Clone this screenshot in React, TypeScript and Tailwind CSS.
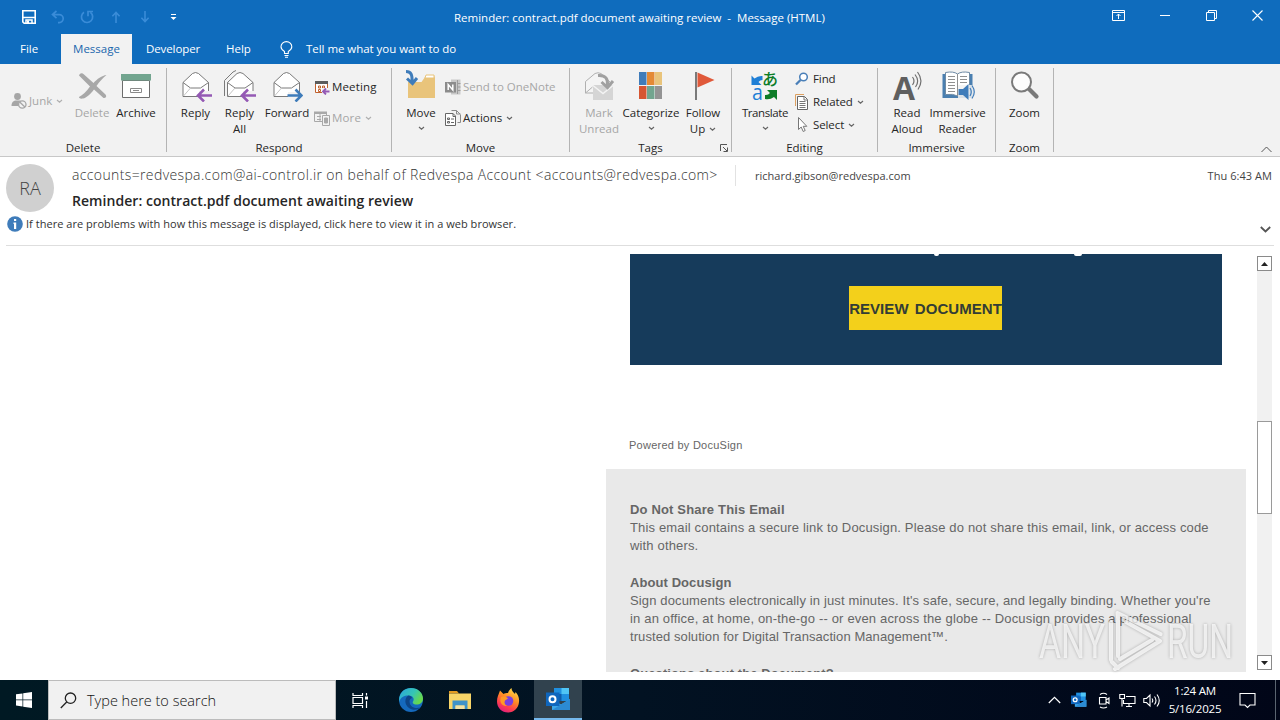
import type { ReactNode } from "react";

function Caret({ className = "" }: { className?: string }) {
  return (
    <svg width="7" height="5" viewBox="0 0 7 5" className={`inline-block shrink-0 ${className}`}>
      <path d="M1 1l2.5 2.2L6 1" fill="none" stroke="currentColor" strokeWidth="1.2" />
    </svg>
  );
}

/* ---------- title bar icons ---------- */

function SaveIcon() {
  return (
    <svg width="14" height="14" viewBox="0 0 14 14">
      <path d="M.8.8h12.4v12.4H2.2L.8 11.8z" fill="none" stroke="#fff" strokeWidth="1.6" />
      <path d="M1 7.500h12M4 13V10h6v3" fill="none" stroke="#fff" strokeWidth="1.5" />
      <path d="M5 10.5h2V13H5z" fill="#fff" />
    </svg>
  );
}

function UndoIcon() {
  return (
    <svg width="14" height="14" viewBox="0 0 14 14" fill="none" stroke="#3a8cd8" strokeWidth="1.7">
      <path d="M5.5 1L1.5 4.6l4 3.6M1.8 4.6h6.4a4 4 0 010 8H7" />
    </svg>
  );
}

function RedoIcon() {
  return (
    <svg width="14" height="14" viewBox="0 0 14 14" fill="none" stroke="#3a8cd8" strokeWidth="1.7">
      <path d="M4 2.2A5.6 5.6 0 1010.4 2.4M8 6.2V1.5h5" />
    </svg>
  );
}

function ArrowIcon({ down = false }: { down?: boolean }) {
  return (
    <svg
      width="10"
      height="12"
      viewBox="0 0 10 12"
      fill="none"
      stroke="#3a8cd8"
      strokeWidth="1.6"
      className={down ? "rotate-180" : ""}
    >
      <path d="M5 12V1.5M1.4 5.2L5 1.5l3.6 3.7" />
    </svg>
  );
}

/* ---------- ribbon icons ---------- */

function JunkIcon() {
  return (
    <svg width="16" height="16" viewBox="0 0 16 16">
      <circle cx="6.500" cy="3.500" r="3.4" fill="#a6a6a6" />
      <path d="M.5 13c0-4 2-5.500 5-5.500h4l-2 5.500z" fill="#a6a6a6" />
      <circle cx="11.3" cy="11.5" r="3.7" fill="#f2f2f2" stroke="#a6a6a6" strokeWidth="1.3" />
      <path d="M8.7 9l5.2 5" stroke="#a6a6a6" strokeWidth="1.3" />
    </svg>
  );
}

function DeleteIcon() {
  return (
    <svg width="32" height="32" viewBox="0 0 32 32">
      <path
        d="M3 5.5C4 3 6 2.5 8 4.500l9.500 8.5C21 9 26 5.500 30.500 5c-3.500 3-7 6.500-10 11l9 8.500c1.500 2 .5 3.500-2 3.500L18 19.500c-3.500 4.500-7.500 8.500-11 9-2.500.5-4.500-.5-4-1.500 3.500-2 7.500-5.500 11-10.500z"
        fill="#a8a8a8"
      />
    </svg>
  );
}

function ArchiveIcon() {
  return (
    <svg width="32" height="32" viewBox="0 0 32 32">
      <path d="M2.5 10.5h27v17h-27z" fill="#fff" stroke="#6d6d6d" />
      <path d="M1 4h30v6.5H1z" fill="#72a58f" />
      <path d="M10.5 18.5h11v4h-11zM13 20.5h6" fill="#fff" stroke="#8a8a8a" />
    </svg>
  );
}

function Envelope() {
  return (
    <>
      <path d="M3 12.5L12.5 3.5q3-2 6 0l10 9v14H3z" fill="#fff" stroke="#7a7a7a" />
      <path d="M3 12.5l7.5 5.500h10l8-5.500" fill="none" stroke="#7a7a7a" />
      <path d="M3.5 26l7-8" stroke="#c4c4c4" />
    </>
  );
}

function ReplyIcon() {
  return (
    <svg width="32" height="32" viewBox="0 0 32 32">
      <Envelope />
      <path d="M19 21h12v11H19z" fill="#f2f2f2" />
      <path d="M32 25.5H18.5M24 19.5l-6 6 6 6" fill="none" stroke="#9459b4" strokeWidth="2.6" />
    </svg>
  );
}

function ReplyAllIcon() {
  return (
    <svg width="32" height="32" viewBox="0 0 32 32">
      <path d="M.5 26V10.500L9 2l3-1.500" fill="none" stroke="#7a7a7a" />
      <g transform="translate(.5 0)">
        <Envelope />
      </g>
      <path d="M19 21h13v11H19z" fill="#f2f2f2" />
      <path d="M32 25.5H18.500M24 19.5l-6 6 6 6" fill="none" stroke="#9459b4" strokeWidth="2.6" />
    </svg>
  );
}

function ForwardIcon() {
  return (
    <svg width="32" height="32" viewBox="0 0 32 32">
      <Envelope />
      <path d="M17 22h15v10H17z" fill="#f2f2f2" />
      <path d="M16.5 25.5H30M24.5 19.5l6 6-6 6" fill="none" stroke="#3f7cba" strokeWidth="2.6" />
    </svg>
  );
}

function MeetingIcon() {
  return (
    <svg width="16" height="16" viewBox="0 0 16 16">
      <path d="M1.500 2.500h12v11h-12z" fill="#fff" stroke="#c0622f" />
      <path d="M1 2h13v3H1z" fill="#5c5c5c" />
      <path d="M4.500 7h2v2h-2zM4.500 10.500h2v2h-2zM8.500 7h2v2h-2z" fill="none" stroke="#c0622f" />
      <path d="M8 9h8v7H8z" fill="#f2f2f2" />
      <path d="M15.500 12.500H9.500M12 9.500l-3 3 3 3" fill="none" stroke="#9459b4" strokeWidth="1.800" />
    </svg>
  );
}

function MoreIcon() {
  return (
    <svg width="16" height="16" viewBox="0 0 16 16" fill="none" stroke="#a8a8a8">
      <path d="M.5 2.5h12v9H.5zM3 6.5h4M3 9.5h4M6 4v7" />
      <path d="M0 1.5h13V4H0z" fill="#a8a8a8" stroke="none" />
      <path d="M8.5 5.5h7v10h-7z" fill="#f2f2f2" />
      <path d="M10.5 8h3v5h-3z" fill="#a8a8a8" />
    </svg>
  );
}

function MoveIcon() {
  return (
    <svg width="32" height="32" viewBox="0 0 32 32">
      <path d="M3 12h13.5l3.500-5h1V5h8l1 3v20H3z" fill="#e9c47b" />
      <path d="M21 5h8v3h-9z" fill="#fff" stroke="#e9c47b" />
      <path d="M1 1.500c5 0 6.500 3 6 11M2 8.500l5.500 5 4.500-5.500" fill="none" stroke="#3f7cba" strokeWidth="3" />
    </svg>
  );
}

function OneNoteIcon() {
  return (
    <svg width="16" height="16" viewBox="0 0 16 16">
      <path d="M6 .5h9.5v15H6z" fill="#c8c8c8" />
      <path d="M12.5 1v14M12.5 4.5h3M12.5 8h3M12.5 11.5h3" stroke="#9c9c9c" />
      <path d="M0 3h11v10.5H0z" fill="#8c8c8c" />
      <path d="M3.2 11V5.5l4.600 5.500V5.5" fill="none" stroke="#fff" strokeWidth="1.5" />
    </svg>
  );
}

function ActionsIcon() {
  return (
    <svg width="17" height="16" viewBox="0 0 17 16" fill="none" stroke="#666">
      <path d="M8 3.5H.5v12h10V6L8 3.500v3h2.500" fill="#fff" />
      <path d="M2.500 8h2v1.500h-2zM2.500 11.500h2V13h-2zM6 9h3M6 12.500h3" />
      <path d="M6.500.5h5l4 4M12.500 12.500h3V5M11.500.5V4h4" stroke="#8a8a8a" />
    </svg>
  );
}

function MarkUnreadIcon() {
  return (
    <svg width="32" height="32" viewBox="0 0 32 32">
      <path d="M2.5 23V11.5L12 3.5q3-1.500 6 0l9 8.500v11z" fill="#f4f4f4" stroke="#b0b0b0" />
      <path d="M2.500 23l7-6" stroke="#b0b0b0" />
      <path d="M10 15h20v15H10z" fill="#d5d5d5" />
      <path d="M10 15.500l10 8 10-8" fill="none" stroke="#f4f4f4" strokeWidth="1.500" />
      <path d="M15 5.500c8-.5 10 3.500 9.500 10M18.500 12l6 5.500 5.500-6.500" fill="none" stroke="#a0a0a0" strokeWidth="3" />
    </svg>
  );
}

function CategorizeIcon() {
  return (
    <svg width="32" height="32" viewBox="0 0 32 32">
      <path d="M4 2h7.500v13H4z" fill="#3f7cba" />
      <path d="M12 2h7.500v13H12z" fill="#e48a35" />
      <path d="M20 2h7v13h-7z" fill="#e9c47b" />
      <path d="M4 16h7.500v13H4z" fill="#d65532" />
      <path d="M12 16h7.500v13H12z" fill="#72a58f" />
      <path d="M20 16h7v13h-7z" fill="#949494" />
    </svg>
  );
}

function FlagIcon() {
  return (
    <svg width="32" height="32" viewBox="0 0 32 32">
      <path d="M8 2h2v28H8z" fill="#7a7a7a" />
      <path d="M10.500 2.500l17 7.500-17 7.500z" fill="#e0593a" />
    </svg>
  );
}

function TranslateIcon() {
  return (
    <svg width="32" height="32" viewBox="0 0 32 32" className="overflow-visible">
      <path d="M2.500 5.500l3 3q3.500-3 8-2.500v4q-2.500 0-4 2l3 3h-10z" fill="#1f7fd6" />
      <path d="M28 30l-3-3q-4 3-9 2v-4q3 .500 5-2l-3-3h10z" fill="#0d7d27" />
      <text x="3" y="29.500" fontFamily="Open Sans" fontSize="21" fontWeight="500" textLength="10.500" lengthAdjust="spacingAndGlyphs" fill="#1f7fd6">
        a
      </text>
      <text x="13" y="15" fontFamily="Noto Sans CJK JP" fontSize="16" fontWeight="500" fill="#0d7d27">
        あ
      </text>
    </svg>
  );
}

function FindIcon() {
  return (
    <svg width="14" height="14" viewBox="0 0 14 14" fill="none" stroke="#4a7fb8">
      <circle cx="8.500" cy="5" r="3.800" strokeWidth="1.500" fill="#fff" />
      <path d="M5.500 8L1 12.500" strokeWidth="2.300" />
    </svg>
  );
}

function RelatedIcon() {
  return (
    <svg width="14" height="16" viewBox="0 0 14 16" fill="none">
      <path d="M.5 12V.5H9" stroke="#dda060" />
      <path d="M2.500 2.500h7l3 3v10h-10z" fill="#fff" stroke="#666" />
      <path d="M9 2.500V6h3.500M4.500 7.500h6M4.500 9.500h6M4.500 11.500h6M4.500 13.500h6" stroke="#777" />
    </svg>
  );
}

function SelectIcon() {
  return (
    <svg width="14" height="16" viewBox="0 0 14 16">
      <path d="M3.500 .5v12l2.700-2.500 2 4.500 2-1-2-4.200h3.600z" fill="#fff" stroke="#777" />
    </svg>
  );
}

function ReadAloudIcon() {
  return (
    <svg width="32" height="32" viewBox="0 0 32 32" className="overflow-visible">
      <text x="2" y="29.500" fontFamily="Open Sans" fontWeight="700" fontSize="33" textLength="22" lengthAdjust="spacingAndGlyphs" fill="#5f5f5f">
        A
      </text>
      <path d="M21.500 7q3 4 0 8M24 4.500q5 6.500.5 12.500M26.500 2q6.500 8.500.5 17.500" fill="none" stroke="#6f6f6f" strokeWidth="1.200" />
    </svg>
  );
}

function ImmersiveReaderIcon() {
  return (
    <svg width="34" height="32" viewBox="0 0 34 32">
      <path d="M1.500 4h30v24h-30z" fill="#4a7fb0" />
      <path d="M4.500 2.500q8-1.500 12 1.500 4-3 12-1.500v22q-8-1-12 1.500-4-2.500-12-1.500z" fill="#fff" stroke="#6f8ba5" />
      <path d="M7 6.500h7M7 9.500h7M7 12.500h7M7 15.500h7M7 18.500h7M7 21.500h7M19 6.500h7M19 9.500h7M19 12.500h7M16.500 4v22" stroke="#909090" />
      <path d="M17 15h15.500v14.500H17z" fill="#f2f2f2" fillOpacity=".85" />
      <path d="M17.500 19h4.500l5.500-5v16l-5.500-5h-4.500z" fill="#3f7cba" />
      <path d="M29 18q2.500 4 0 8M31 15.500q4.500 6.500 0 13" fill="none" stroke="#3f7cba" strokeWidth="1.200" />
    </svg>
  );
}

function ZoomIcon() {
  return (
    <svg width="32" height="32" viewBox="0 0 32 32">
      <path d="M19 18l8.500 8.500" stroke="#7a7a7a" strokeWidth="4.200" strokeLinecap="round" />
      <circle cx="12.500" cy="12" r="9.500" fill="#fdfdfd" stroke="#7a7a7a" strokeWidth="2" />
    </svg>
  );
}

/* ---------- ribbon ---------- */

interface IBigButton {
  icon: ReactNode;
  lines: string[];
  width: string;
  caret?: boolean;
  disabled?: boolean;
}

function BigButton({ icon, lines, width, caret, disabled }: IBigButton) {
  return (
    <div className={`flex shrink-0 flex-col items-center whitespace-nowrap ${width} ${disabled ? "text-[#a6a6a6]" : "text-[#262626]"}`}>
      <div className="mb-[3px] flex h-8 justify-center">{icon}</div>
      {lines.map((line, i) => (
        <div key={line} className="flex h-4 items-center gap-1 leading-4">
          {line}
          {caret && i === 1 && <Caret className="text-[#666]" />}
        </div>
      ))}
      {caret && lines.length === 1 && <Caret className="mt-[5px] text-[#666]" />}
    </div>
  );
}

interface ISmallButton {
  icon: ReactNode;
  label: string;
  caret?: boolean;
  disabled?: boolean;
}

function SmallButton({ icon, label, caret, disabled }: ISmallButton) {
  return (
    <div className={`flex h-4 items-center whitespace-nowrap ${disabled ? "text-[#a6a6a6]" : "text-[#262626]"}`}>
      <span className="flex w-[18px] shrink-0 items-center">{icon}</span>
      <span className="leading-4">{label}</span>
      {caret && <Caret className={`ml-1 ${disabled ? "text-[#b0b0b0]" : "text-[#666]"}`} />}
    </div>
  );
}

function Group({ label, width, launcher, children }: { label: string; width: string; launcher?: boolean; children: ReactNode }) {
  return (
    <div className={`relative mt-1 flex h-[84px] shrink-0 flex-col border-r border-[#b4b4b4] ${width}`}>
      <div className="flex h-[72px] shrink-0 pt-0.5">{children}</div>
      <div className="text-center leading-4 text-[#262626]">{label}</div>
      {launcher && (
        <svg width="8" height="8" viewBox="0 0 8 8" className="absolute right-[3px] bottom-0" fill="none" stroke="#555">
          <path d="M.5 7V.5H7M3 3l4 4M7.500 3.500v4h-4" />
        </svg>
      )}
    </div>
  );
}

function Ribbon() {
  return (
    <div className="flex h-[93px] border-b border-[#c8c8c8] bg-[#f2f2f2] text-[11.5px]">
      <Group label="Delete" width="w-[167px]">
        <div className="flex w-[72px] items-start pt-[23px] pl-[11px]">
          <SmallButton icon={<JunkIcon />} label="Junk" caret disabled />
        </div>
        <BigButton icon={<DeleteIcon />} lines={["Delete"]} width="w-[40px]" disabled />
        <BigButton icon={<ArchiveIcon />} lines={["Archive"]} width="w-[48px]" />
      </Group>
      <Group label="Respond" width="w-[225px]">
        <div className="w-1.5" />
        <BigButton icon={<ReplyIcon />} lines={["Reply"]} width="w-[45px]" />
        <BigButton icon={<ReplyAllIcon />} lines={["Reply", "All"]} width="w-[43px]" />
        <BigButton icon={<ForwardIcon />} lines={["Forward"]} width="w-[52px]" />
        <div className="flex flex-col gap-[15px] pt-[9px] pl-px tracking-[0.15px]">
          <SmallButton icon={<MeetingIcon />} label="Meeting" />
          <SmallButton icon={<MoreIcon />} label="More" caret disabled />
        </div>
      </Group>
      <Group label="Move" width="w-[178px]">
        <div className="w-1.5" />
        <BigButton icon={<MoveIcon />} lines={["Move"]} width="w-[46px]" caret />
        <div className="flex flex-col gap-[15px] pt-[9px] pl-px">
          <SmallButton icon={<OneNoteIcon />} label="Send to OneNote" disabled />
          <SmallButton icon={<ActionsIcon />} label="Actions" caret />
        </div>
      </Group>
      <Group label="Tags" width="w-[162px]" launcher>
        <div className="w-1.5" />
        <BigButton icon={<MarkUnreadIcon />} lines={["Mark", "Unread"]} width="w-[46px]" disabled />
        <BigButton icon={<CategorizeIcon />} lines={["Categorize"]} width="w-[58px]" caret />
        <BigButton icon={<FlagIcon />} lines={["Follow", "Up"]} width="w-[46px]" caret />
      </Group>
      <Group label="Editing" width="w-[146px]">
        <div className="w-[7px]" />
        <div className="tracking-[-0.4px]">
          <BigButton icon={<TranslateIcon />} lines={["Translate"]} width="w-[52px]" caret />
        </div>
        <div className="flex flex-col gap-[7px] pt-px pl-1 tracking-[-0.1px]">
          <SmallButton icon={<FindIcon />} label="Find" />
          <SmallButton icon={<RelatedIcon />} label="Related" caret />
          <SmallButton icon={<SelectIcon />} label="Select" caret />
        </div>
      </Group>
      <Group label="Immersive" width="w-[118px]">
        <div className="w-2" />
        <BigButton icon={<ReadAloudIcon />} lines={["Read", "Aloud"]} width="w-[42px]" />
        <BigButton icon={<ImmersiveReaderIcon />} lines={["Immersive", "Reader"]} width="w-[59px]" />
      </Group>
      <Group label="Zoom" width="w-[58px]">
        <BigButton icon={<ZoomIcon />} lines={["Zoom"]} width="w-[57px]" />
      </Group>
      <div className="flex grow items-end justify-end pr-2 pb-[3px]">
        <svg width="11" height="7" viewBox="0 0 11 7" fill="none" stroke="#555">
          <path d="M.5 6l5-5 5 5" />
        </svg>
      </div>
    </div>
  );
}

function TitleBar() {
  return (
    <div className="flex h-[34px] items-center bg-[#0f6cbd] text-[11.5px] text-white">
      <div className="flex w-[454px] items-center pl-[22px]">
        <SaveIcon />
        <span className="ml-[15px]"><UndoIcon /></span>
        <span className="ml-[15px]"><RedoIcon /></span>
        <span className="ml-[17px]"><ArrowIcon /></span>
        <span className="ml-[19px]"><ArrowIcon down /></span>
        <svg width="7" height="7" viewBox="0 0 7 7" className="ml-[20px]">
          <path d="M1 .5h5" stroke="#fff" />
          <path d="M.5 3h6l-3 3z" fill="#fff" />
        </svg>
      </div>
      <div className="pt-0.5 whitespace-pre">Reminder: contract.pdf document awaiting review  -  Message (HTML)</div>
      <div className="mb-1 ml-auto flex items-center pr-[17px]">
        <svg width="13" height="11" viewBox="0 0 13 11" fill="none" stroke="#fff">
          <path d="M.5.5h12v10H.5zM.5 2.500h12M6.500 9V4M4.500 6l2-2 2 2" />
        </svg>
        <svg width="11" height="11" viewBox="0 0 11 11" className="ml-[35px]" stroke="#fff">
          <path d="M0 5.500h10" />
        </svg>
        <svg width="11" height="11" viewBox="0 0 11 11" className="ml-[35px]" fill="none" stroke="#fff">
          <path d="M.5 2.500h8v8h-8zM2.500 2.500V.5h8v8h-2" />
        </svg>
        <svg width="11" height="11" viewBox="0 0 11 11" className="ml-[35px]" stroke="#fff" strokeWidth="1.100">
          <path d="M.5.5l10 10M10.500.5l-10 10" />
        </svg>
      </div>
    </div>
  );
}

function Tabs() {
  return (
    <div className="flex h-[30px] items-center bg-[#0f6cbd] text-[11.5px] text-white">
      <div className="w-[61px] pl-5">File</div>
      <div className="flex h-full w-[71px] items-center justify-center bg-[#f2f2f2] text-[#1a66ad]">Message</div>
      <div className="w-[94px] pl-3.5 tracking-[-0.1px]">Developer</div>
      <div className="w-[54px]">Help</div>
      <svg width="13" height="17" viewBox="0 0 13 17" fill="none" stroke="#fff" strokeWidth="1.100">
        <path d="M4.500 12.500v-2C2 9 1 7.500 1 5.800a5.400 5.200 0 0110.800 0c0 1.700-1 3.200-3.500 4.700v2zM4.500 14.500h4M5 16.300h3" />
      </svg>
      <div className="ml-[13px] tracking-[-0.04px]">Tell me what you want to do</div>
    </div>
  );
}

/* ---------- message ---------- */

function MessageHeader() {
  return (
    <div className="h-[97px] pt-[7px]">
      <div className="flex h-12 px-1.5">
        <div className="flex size-12 items-center justify-center rounded-full bg-[#d0d0d0] text-[18px] font-light text-[#444]">RA</div>
        <div className="ml-[18px] grow">
          <div className="flex h-[22px] items-center whitespace-nowrap">
            <div className="-mt-0.5 w-[663px] text-[14px] font-light tracking-[0.375px] text-[#333]">
              accounts=redvespa.com@ai-control.ir on behalf of Redvespa Account &lt;accounts@redvespa.com&gt;
            </div>
            <div className="h-[21px] w-[20px] border-l border-[#e2e2e2]" />
            <div className="mt-0.5 text-[11px] text-[#444]">richard.gibson@redvespa.com</div>
            <div className="mt-0.5 ml-auto pr-0.5 text-[11px] tracking-[0.05px] text-[#444]">Thu 6:43 AM</div>
          </div>
          <div className="mt-1 text-[14px] leading-[22px] font-semibold tracking-[0.05px] text-[#262626]">
            Reminder: contract.pdf document awaiting review
          </div>
        </div>
      </div>
      <div className="flex h-6 items-center pr-[9px] pl-[7px]">
        <svg width="16" height="16" viewBox="0 0 16 16">
          <circle cx="8" cy="8" r="7.800" fill="#3f7cba" />
          <path d="M7 3h2.200v2H7zM6.500 6.500h2.700V13H7V8h-.5z" fill="#fff" />
        </svg>
        <div className="ml-[3px] text-[11px] tracking-[0.035px] text-[#333]">
          If there are problems with how this message is displayed, click here to view it in a web browser.
        </div>
        <svg width="11" height="7" viewBox="0 0 11 7" fill="none" stroke="#555" strokeWidth="1.800" className="mt-2.5 ml-auto">
          <path d="M.8 1l4.700 4.500L10.200 1" />
        </svg>
      </div>
      <div className="mx-1.5 mt-[9px] h-px bg-[#dedede]" />
    </div>
  );
}

function EmailBody() {
  return (
    <div className="h-[418px] w-[640px] overflow-hidden font-['Liberation_Sans',sans-serif] text-[13px] leading-[18px] whitespace-nowrap text-[#666]">
      <div className="mx-6 h-[111px] bg-[#163b5b]">
        <div className="flex h-[32px] pl-[304px]">
          <div className="h-0.5 w-[5px] rounded-b-sm bg-white" />
          <div className="ml-[135px] h-0.5 w-[8px] rounded-b-sm bg-white" />
        </div>
        <div className="ml-[219px] flex h-11 w-[153px] items-center justify-center bg-[#f3d01b] pt-0.5 text-[15px] font-bold tracking-[0.05px] text-[#333d35] [word-spacing:2px]">
          REVIEW DOCUMENT
        </div>
      </div>
      <div className="mt-[71px] ml-[23px] text-[11px] tracking-[0.25px]">Powered by DocuSign</div>
      <div className="mt-[15px] h-[210px] bg-[#e9e9e9] pt-8 pl-6">
        <div className="font-bold tracking-[0.16px]">Do Not Share This Email</div>
        <div className="tracking-[0.16px]">This email contains a secure link to Docusign. Please do not share this email, link, or access code</div>
        <div className="tracking-[0.16px]">with others.</div>
        <div className="mt-[19px] font-bold tracking-[0.08px]">About Docusign</div>
        <div className="tracking-[0.14px]">Sign documents electronically in just minutes. It's safe, secure, and legally binding. Whether you're</div>
        <div className="tracking-[0.17px]">in an office, at home, on-the-go -- or even across the globe -- Docusign provides a professional</div>
        <div className="tracking-[0.08px]">trusted solution for Digital Transaction Management™.</div>
        <div className="mt-[19px] font-bold tracking-[0.1px]">Questions about the Document?</div>
      </div>
    </div>
  );
}

function ScrollBar() {
  return (
    <div className="mt-0.5 ml-[11px] flex h-[414px] w-[15px] flex-col bg-[#f1f1f1]">
      <div className="flex h-[15px] items-center justify-center border border-[#8a8a8a] bg-white">
        <svg width="7" height="4" viewBox="0 0 7 4">
          <path d="M0 4l3.500-4L7 4z" fill="#222" />
        </svg>
      </div>
      <div className="mt-[150px] h-[93px] border border-[#9a9a9a] bg-white" />
      <div className="mt-auto flex h-[15px] items-center justify-center border border-[#8a8a8a] bg-white">
        <svg width="7" height="4" viewBox="0 0 7 4">
          <path d="M0 0h7L3.500 4z" fill="#222" />
        </svg>
      </div>
    </div>
  );
}

function Watermark() {
  return (
    <svg width="204" height="68" viewBox="0 0 204 68" className="absolute top-[608px] left-[1034px] overflow-visible drop-shadow-[0_0_1.5px_rgba(0,0,0,0.35)]">
      <g fontFamily="Roboto" fontWeight="400" fontSize="48" fill="#fff" fillOpacity=".72">
        <text x="5" y="50" textLength="66" lengthAdjust="spacingAndGlyphs">
          ANY
        </text>
        <text x="133" y="50" textLength="66" lengthAdjust="spacingAndGlyphs">
          RUN
        </text>
      </g>
      <path
        d="M77 14v38M84 12v36M84 10l-.5-5 43 21M92 14l34 19-45 28M86 51l32-19M78 54l6 6"
        fill="none"
        stroke="#fff"
        strokeOpacity=".75"
        strokeWidth="4"
        strokeLinejoin="round"
        strokeLinecap="round"
      />
    </svg>
  );
}

/* ---------- taskbar ---------- */

function EdgeIcon() {
  return (
    <svg width="26" height="26" viewBox="0 0 26 26">
      <defs>
        <linearGradient id="edgeTop" x1="0" y1="0" x2="1" y2=".5">
          <stop offset="0" stopColor="#2ba5e0" />
          <stop offset=".6" stopColor="#35c5b5" />
          <stop offset="1" stopColor="#67d84d" />
        </linearGradient>
      </defs>
      <circle cx="13" cy="13" r="12" fill="#1569bd" />
      <path d="M1.200 11C2.500 4.500 7 1 13 1c7 0 12 5 12 10.500 0 4-3 6-6.500 6-3 0-4.500-1.500-3.500-3 2-3-.5-6-4.500-6C6 8.500 2.500 10 1.200 15z" fill="url(#edgeTop)" />
      <path d="M10.500 8.500c-4 2-4.500 9 .5 12.500 4 2.800 8.500 2 11.500-.5-3.500 1-10.500 1-11-6 0-2 1-3 2.500-3.500-.5-1.500-1.800-2.500-3.500-2.500z" fill="#0d4587" />
    </svg>
  );
}

function FolderIcon() {
  return (
    <svg width="22" height="18" viewBox="0 0 22 18">
      <path d="M0 0h8l2 2.500H0z" fill="#e39b20" />
      <path d="M0 2.500h22V18H0z" fill="#f8d568" />
      <path d="M3.500 9.500h15V18h-3v-3.500h-9V18h-3z" fill="#3f93c9" />
      <path d="M6.500 14.500h9V18h-9z" fill="#f3e2a4" />
    </svg>
  );
}

function FirefoxIcon() {
  return (
    <svg width="24" height="25" viewBox="0 0 24 25">
      <defs>
        <linearGradient id="fox" x1=".8" y1="0" x2=".3" y2="1">
          <stop offset="0" stopColor="#ffe14a" />
          <stop offset=".45" stopColor="#ff8a25" />
          <stop offset=".75" stopColor="#ff3d4f" />
          <stop offset="1" stopColor="#e01f7d" />
        </linearGradient>
      </defs>
      <path d="M4 2.500L7.500 6c1-.7 3-1 4.500-1 .5-2 2-4 3.500-5 0 3 2 4 3.500 6l.5-2c2.500 2.500 4 6 3.500 10C22.500 20 18 24.500 12 24.500S1 20 1 13.500C1 9 2.500 7 4 2.500z" fill="url(#fox)" />
      <circle cx="12.500" cy="13" r="4.800" fill="#7a3ee0" />
      <path d="M5 9c3-1 5-.5 7 1.500l-3 2c-1 2-.5 4 2 5.500-5 .5-8-4-6-9z" fill="#ff9a25" />
    </svg>
  );
}

function OutlookIcon({ size = 25 }: { size?: number }) {
  return (
    <svg width={size} height={size} viewBox="0 0 25 25">
      <path d="M8 1h15v13H8z" fill="#1f8fe0" />
      <path d="M15.500 1H23v6h-7.500z" fill="#50c5f5" />
      <path d="M8 7h7.500v7H8z" fill="#0f5cab" />
      <path d="M6 23V12l9 5.500 9-5.500v11z" fill="#3ba8ea" />
      <path d="M6 23l18-11v11z" fill="#2c8bd3" />
      <path d="M0 5.500h13.500V19H0z" fill="#0f66bd" />
      <circle cx="6.500" cy="12.200" r="3" fill="none" stroke="#fff" strokeWidth="2" />
    </svg>
  );
}

function Taskbar() {
  return (
    <div className="flex h-10 items-center bg-gradient-to-r from-[#001923] via-[#021222] to-[#010618] text-white">
      <div className="flex w-12 justify-center">
        <svg width="16" height="16" viewBox="0 0 16 16" fill="#fff">
          <path d="M0 2.300l6.500-.9v6.200H0zM7.200 1.300L16 0v7.600H7.200zM0 8.300h6.500v6.200L0 13.600zM7.200 8.300H16V16l-8.800-1.300z" />
        </svg>
      </div>
      <div className="flex h-10 w-[288px] items-center border border-[#bcbcbc] bg-[#f1f1f1] pl-[11px]">
        <svg width="17" height="17" viewBox="0 0 17 17" fill="none" stroke="#222" strokeWidth="1.300">
          <circle cx="10.500" cy="6.200" r="5.200" />
          <path d="M6.700 10L.8 16" />
        </svg>
        <span className="mt-0.5 ml-[10px] text-[14.5px] font-light text-[#111]">Type here to search</span>
      </div>
      <div className="flex w-12 justify-center">
        <svg width="17" height="17" viewBox="0 0 17 17" fill="none" stroke="#fff" strokeWidth="1.200">
          <path d="M1 1v2.500h9.500V1M1 16v-2.500h9.500V16M1 5.500h9.500v6H1zM14.500 1v2.500M14.500 9v7" />
          <path d="M13 4.500h3v3h-3z" fill="#fff" stroke="none" />
        </svg>
      </div>
      <div className="flex w-[54px] justify-center"><EdgeIcon /></div>
      <div className="flex w-[44px] justify-center"><FolderIcon /></div>
      <div className="flex w-[52px] justify-center"><FirefoxIcon /></div>
      <div className="flex h-10 w-12 items-center justify-center border-b-2 border-[#76b9ed] bg-[#31424e]"><OutlookIcon /></div>
      <div className="ml-auto flex items-center">
        <svg width="13" height="8" viewBox="0 0 13 8" fill="none" stroke="#fff" strokeWidth="1.200">
          <path d="M.8 7l5.700-5.700L12.200 7" />
        </svg>
        <span className="ml-[10px]"><OutlookIcon size={16} /></span>
        <svg width="12" height="17" viewBox="0 0 12 17" fill="none" stroke="#fff" className="ml-[11px]" strokeWidth="1.100">
          <path d="M1.500 5.500h6.500v6.500H1.500zM8 8l3-2v5.500l-3-2M2 2.500q3.500-2.500 7 0M2 15q3.500 2 7 0" />
        </svg>
        <svg width="17" height="15" viewBox="0 0 17 15" fill="none" stroke="#fff" className="ml-[9px]" strokeWidth="1.100">
          <path d="M7 3.500h9v7H4.500V7M.8 1.500h4.700v4H.8zM3 5.500v8M10 10.500v3M7 13.500h6" />
        </svg>
        <svg width="17" height="15" viewBox="0 0 17 15" fill="none" stroke="#fff" className="ml-[7px]" strokeWidth="1.100">
          <path d="M.8 5.500h2.700L7 2v11L3.500 9.500H.8zM9 5.500q1.500 2 0 4M11.500 3.500q3 4 0 8M14 1.500q4.500 6 0 12" />
        </svg>
        <div className="ml-[3px] w-[64px] text-center text-[11.5px] leading-[18px] tracking-[-0.2px] whitespace-nowrap">
          <div>1:24 AM</div>
          <div>5/16/2025</div>
        </div>
        <svg width="17" height="17" viewBox="0 0 17 17" fill="none" stroke="#fff" className="ml-[12px]" strokeWidth="1.100">
          <path d="M1 1.500h15v11.500h-5L8.500 15.500 6 13H1z" />
        </svg>
        <div className="ml-[19px] h-10 w-[5px] border-l border-[#5a6470]" />
      </div>
    </div>
  );
}

export default function App() {
  return (
    <div className="relative flex h-[720px] w-[1280px] flex-col overflow-hidden bg-white font-['Open_Sans','Noto_Sans',sans-serif]">
      <TitleBar />
      <Tabs />
      <Ribbon />
      <div className="flex h-[523px] flex-col">
        <MessageHeader />
        <div className="flex pl-[606px]">
          <EmailBody />
          <ScrollBar />
        </div>
      </div>
      <Taskbar />
      <Watermark />
    </div>
  );
}
